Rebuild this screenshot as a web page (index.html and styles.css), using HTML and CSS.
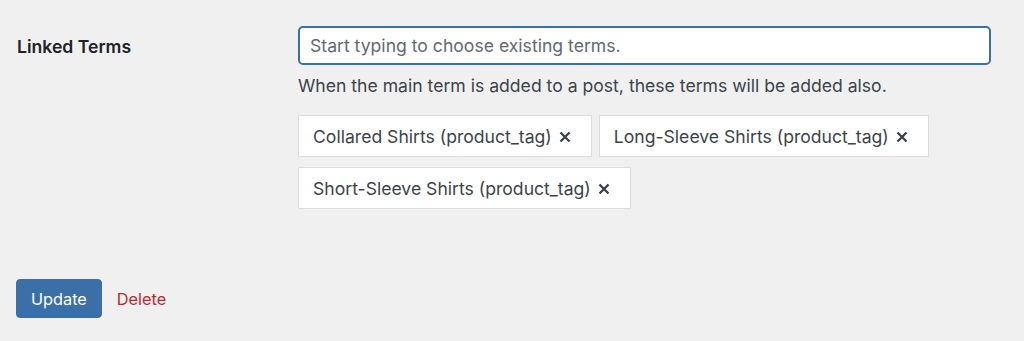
FILE: index.html
```html
<!DOCTYPE html>
<html lang="en">
<head>
    <meta charset="UTF-8">
    <meta name="viewport" content="width=device-width, initial-scale=1.0">
    <title>Edit Term</title>
    <link rel="stylesheet" href="styles.css">
</head>
<body>
    <form class="term-form">
        <div class="form-row">
            <label class="row-label" for="linked-terms">Linked Terms</label>
            <div class="row-field">
                <input type="text" id="linked-terms" class="term-search" placeholder="Start typing to choose existing terms.">
                <p class="description">When the main term is added to a post, these terms will be added also.</p>
                <ul class="tag-list">
                    <li class="tag">
                        Collared Shirts (product_tag)
                        <svg class="remove" viewBox="0 0 12 12"><path d="M1.5 1.5l9 9M10.5 1.5l-9 9"/></svg>
                    </li>
                    <li class="tag">
                        Long-Sleeve Shirts (product_tag)
                        <svg class="remove" viewBox="0 0 12 12"><path d="M1.5 1.5l9 9M10.5 1.5l-9 9"/></svg>
                    </li>
                    <li class="tag">
                        Short-Sleeve Shirts (product_tag)
                        <svg class="remove" viewBox="0 0 12 12"><path d="M1.5 1.5l9 9M10.5 1.5l-9 9"/></svg>
                    </li>
                </ul>
            </div>
        </div>

        <div class="actions">
            <button type="button" class="button-primary">Update</button>
            <a href="#" class="delete-link">Delete</a>
        </div>
    </form>
</body>
</html>
```

FILE: styles.css
```css
body {
    margin: 0;
    padding: 26px 16px;
    background: #f0f0f1;
    color: #1d2327;
    font-family: Inter, "Liberation Sans", Arial, sans-serif;
    font-size: 17.6px;
}

.form-row {
    display: grid;
    grid-template-columns: 282px 693px;
}

.row-label {
    padding-left: 1px;
    font-weight: 600;
    font-size: 17.6px;
    line-height: 41px;
    color: #1d2327;
}

.term-search {
    box-sizing: border-box;
    width: 100%;
    height: 39px;
    margin: 0;
    padding: 0 10px;
    border: 2px solid #3b6fa8;
    border-radius: 5px;
    background: #fff;
    font-family: inherit;
    font-size: 17.6px;
    color: #2c3338;
    outline: none;
}

.term-search::placeholder {
    color: #646970;
}

.description {
    margin: 9px 0 0;
    line-height: 24px;
    color: #3c434a;
}

.tag-list {
    display: flex;
    flex-wrap: wrap;
    gap: 10px 7px;
    margin: 17px 0 0;
    padding: 0;
    list-style: none;
}

.tag {
    display: flex;
    align-items: center;
    gap: 7px;
    height: 42px;
    box-sizing: border-box;
    padding: 1px 20px 0 14px;
    background: #fff;
    border: 1px solid #dcdcde;
    color: #3c434a;
}

.remove {
    width: 12px;
    height: 12px;
    fill: none;
    stroke: #3c434a;
    stroke-width: 2.4;
}

.actions {
    display: flex;
    align-items: center;
    gap: 15px;
    margin-top: 70px;
}

.button-primary {
    height: 39px;
    padding: 0 14px;
    border: 1px solid #3b6fa8;
    border-radius: 4px;
    background: #3b6fa8;
    color: #fff;
    font-family: inherit;
    font-size: 16.3px;
}

.delete-link {
    font-size: 16.3px;
    color: #b32d2e;
    text-decoration: none;
}
```
